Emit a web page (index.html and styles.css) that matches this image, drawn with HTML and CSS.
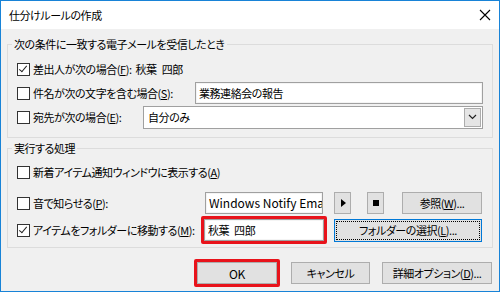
FILE: index.html
```html
<!DOCTYPE html>
<html lang="ja">
<head>
  <meta charset="UTF-8">
  <title>仕分けルールの作成</title>
  <link rel="stylesheet" href="styles.css">
</head>
<body>
  <div class="window">
    <div class="titlebar">
      <span class="title">仕分けルールの作成</span>
      <svg class="close-icon" width="12" height="12" viewBox="0 0 12 12">
        <path d="M1 1 L11 11 M11 1 L1 11" stroke="#000" stroke-width="1.1" fill="none"/>
      </svg>
    </div>

    <div class="dialog-body">
      <fieldset class="group">
        <legend class="group-title">次の条件に一致する電子メールを受信したとき</legend>
        <div class="row">
          <span class="checkbox checked"></span>
          <span class="label">差出人が次の場合(<u>F</u>): <span class="name">秋葉 四郎</span></span>
        </div>
        <div class="row row-gap">
          <div class="field-label subject-label">
            <span class="checkbox"></span>
            <span class="label">件名が次の文字を含む場合(<u>S</u>):</span>
          </div>
          <div class="textbox grow">業務連絡会の報告</div>
        </div>
        <div class="row row-gap">
          <div class="field-label to-label">
            <span class="checkbox"></span>
            <span class="label">宛先が次の場合(<u>E</u>):</span>
          </div>
          <div class="combobox grow">
            <span class="combo-text">自分のみ</span>
            <span class="combo-btn">
              <svg width="9" height="6" viewBox="0 0 9 6">
                <path d="M1 1 L4.5 4.5 L8 1" stroke="#222" stroke-width="1.2" fill="none"/>
              </svg>
            </span>
          </div>
        </div>
      </fieldset>

      <fieldset class="group group-actions">
        <legend class="group-title">実行する処理</legend>
        <div class="row">
          <span class="checkbox"></span>
          <span class="label">新着アイテム通知ウィンドウに表示する(<u>A</u>)</span>
        </div>
        <div class="row sound-row">
          <div class="field-label sound-label">
            <span class="checkbox"></span>
            <span class="label">音で知らせる(<u>P</u>):</span>
          </div>
          <div class="textbox sound-box">Windows Notify Ema</div>
          <button class="button icon-button play-button"><span class="play-icon"></span></button>
          <button class="button icon-button stop-button"><span class="stop-icon"></span></button>
          <button class="button browse-button">参照(<u>W</u>)...</button>
        </div>
        <div class="row move-row">
          <div class="field-label move-label">
            <span class="checkbox checked"></span>
            <span class="label">アイテムをフォルダーに移動する(<u>M</u>):</span>
          </div>
          <div class="highlight">
            <div class="textbox folder-box"><span class="name">秋葉 四郎</span></div>
          </div>
          <button class="button focus-button">フォルダーの選択(<u>L</u>)...</button>
        </div>
      </fieldset>

      <div class="button-row">
        <div class="highlight">
          <button class="button ok-button">OK</button>
        </div>
        <button class="button cancel-button">キャンセル</button>
        <button class="button options-button">詳細オプション(<u>D</u>)...</button>
      </div>
    </div>
  </div>
</body>
</html>
```

FILE: styles.css
```css
body {
  margin: 0;
  background-color: #ffffff;
  font-family: "Noto Sans CJK JP", "Noto Sans", sans-serif;
  font-size: 11px;
  letter-spacing: -0.45px;
  line-height: 16px;
  color: #000000;
  font-feature-settings: "palt";
}

.window {
  width: 500px;
  height: 292px;
  box-sizing: border-box;
  border: 1px solid #1883d7; /* Windows accent blue */
  display: flex;
  flex-direction: column;
}

.titlebar {
  height: 28px;
  background-color: #ffffff;
  display: flex;
  align-items: center;
  justify-content: space-between;
  padding: 0 8px 0 8px;
}

.title {
  font-size: 11px;
}

.dialog-body {
  flex: 1;
  background-color: #f0f0f0;
  padding: 7px 6px 4px 6px;
  display: flex;
  flex-direction: column;
}

.group {
  margin: 0;
  border: 1px solid #dcdcdc;
  padding: 6px 9px 9px 9px;
}

.group-actions {
  margin-top: 2px;
  padding-top: 5px;
  padding-bottom: 3px;
}

.group-title {
  margin-left: -5px;
  padding: 0 2px;
  line-height: 16px;
}

.row {
  display: flex;
  align-items: center;
  height: 22px;
}

.row-gap {
  margin-top: 2px;
}

.sound-row {
  margin-top: 9px;
}

.move-row {
  margin-top: 2px;
  height: 28px;
}

.field-label {
  display: flex;
  align-items: center;
  flex-shrink: 0;
}

.subject-label { width: 178px; }
.to-label { width: 126px; }
.sound-label { width: 188px; }
.move-label { width: 184px; }

.checkbox {
  width: 13px;
  height: 13px;
  box-sizing: border-box;
  border: 1px solid #333333;
  background-color: #ffffff;
  margin-right: 3px;
  flex-shrink: 0;
  position: relative;
}

.checkbox.checked::after {
  content: "";
  position: absolute;
  left: 3px;
  top: 0px;
  width: 3px;
  height: 7px;
  border-right: 1px solid #222222;
  border-bottom: 1px solid #222222;
  transform: rotate(40deg);
}

.label {
  white-space: nowrap;
}

.name {
  word-spacing: 3px;
  margin-left: 2px;
}

.textbox {
  height: 22px;
  box-sizing: border-box;
  border: 1px solid #a0a0a0;
  box-shadow: inset 0 0 0 1px #f4f4f4;
  background-color: #ffffff;
  padding: 2px 3px;
  white-space: nowrap;
  overflow: hidden;
}

.grow {
  flex: 1;
}

.combobox {
  height: 23px;
  box-sizing: border-box;
  border: 1px solid #a0a0a0;
  background-color: #ffffff;
  display: flex;
  align-items: center;
  justify-content: space-between;
  padding: 1px;
}

.combo-text {
  padding-left: 3px;
}

.combo-btn {
  width: 17px;
  height: 19px;
  box-sizing: border-box;
  border: 1px solid #acacac;
  background-color: #e5e5e5;
  display: flex;
  align-items: center;
  justify-content: center;
}

.button {
  height: 22px;
  box-sizing: border-box;
  border: 1px solid #adadad;
  background-color: #e1e1e1;
  font-family: inherit;
  font-size: 11px;
  letter-spacing: -0.45px;
  font-feature-settings: "palt";
  color: #000000;
  padding: 0;
  white-space: nowrap;
}

.sound-box {
  width: 118px;
  flex-shrink: 0;
  letter-spacing: 0;
  font-size: 12px;
}

.icon-button {
  width: 17px;
  display: flex;
  align-items: center;
  justify-content: center;
}

.play-button {
  margin-left: 11px;
}

.stop-button {
  margin-left: 16px;
}

.play-icon {
  width: 0;
  height: 0;
  border-top: 4px solid transparent;
  border-bottom: 4px solid transparent;
  border-left: 5px solid #000000;
  margin-left: 1px;
}

.stop-icon {
  width: 6px;
  height: 6px;
  background-color: #000000;
}

.browse-button {
  width: 80px;
  margin-left: 18px;
}

.highlight {
  border: 3px solid #e8131b; /* annotation red */
  border-radius: 2px;
  display: flex;
}

.folder-box {
  width: 120px;
}

.folder-box .name {
  margin-left: 0;
}

.focus-button {
  width: 148px;
  height: 23px;
  margin-left: 7px;
  border-color: #0078d7;
  outline: 1px dotted #000000;
  outline-offset: -3px;
}

.button-row {
  margin-top: 11px;
  display: flex;
  justify-content: flex-end;
  align-items: center;
  margin-right: 1px;
}

.ok-button {
  width: 80px;
  font-size: 12px;
}

.cancel-button {
  width: 79px;
  margin-left: 11px;
}

.options-button {
  width: 110px;
  margin-left: 12px;
}
```
